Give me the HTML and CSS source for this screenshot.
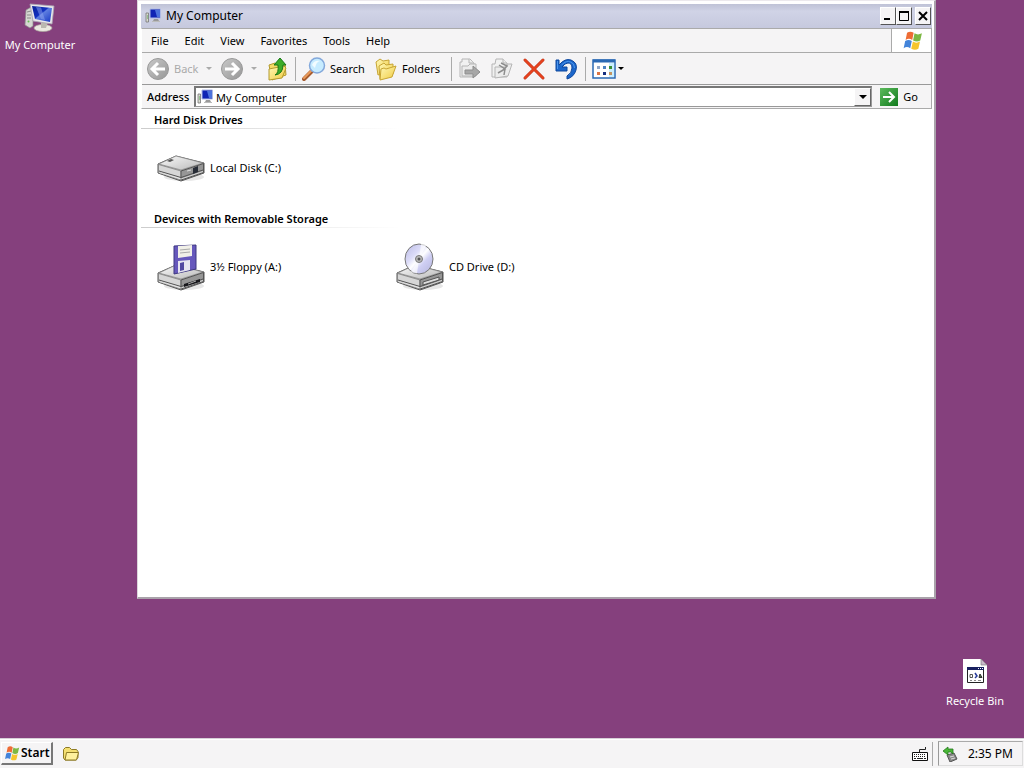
FILE: index.html
```
<!DOCTYPE html>
<html lang="en">
<head>
<meta charset="utf-8">
<title>My Computer</title>
<link rel="stylesheet" href="styles.css">
</head>
<body>
<svg class="defs" aria-hidden="true">
  <defs>
    <linearGradient id="screen" x1="0" y1="0" x2="1" y2="1"><stop offset="0" stop-color="#0a2196"/><stop offset=".45" stop-color="#1230c0"/><stop offset=".5" stop-color="#5f7fe0"/><stop offset="1" stop-color="#1637c4"/></linearGradient>
    <linearGradient id="metal" x1="0" y1="0" x2="1" y2="1"><stop offset="0" stop-color="#fafafa"/><stop offset="1" stop-color="#b9b9b9"/></linearGradient>
    <linearGradient id="greybtn" x1="0" y1="0" x2="1" y2="1"><stop offset="0" stop-color="#c9c9c9"/><stop offset="1" stop-color="#969696"/></linearGradient>
    <linearGradient id="yellow" x1="0" y1="0" x2="1" y2="1"><stop offset="0" stop-color="#fff9b8"/><stop offset="1" stop-color="#f0ca3f"/></linearGradient>
    <linearGradient id="green" x1="0" y1="0" x2="1" y2="1"><stop offset="0" stop-color="#5cbb5c"/><stop offset="1" stop-color="#117a1d"/></linearGradient>
    <linearGradient id="disc" x1="0" y1="0" x2="1" y2="1"><stop offset="0" stop-color="#b8b8e4"/><stop offset=".35" stop-color="#dcdcf8"/><stop offset=".5" stop-color="#ffffff"/><stop offset=".65" stop-color="#cfcff4"/><stop offset="1" stop-color="#b4b4dc"/></linearGradient>
    <symbol id="pc" viewBox="0 0 16 16">
      <path d="M1 5h2.500v9H1z" fill="#d9dbd0" stroke="#777" stroke-width=".8"/><path d="M2 8h1M2 10h1" stroke="#52a652"/>
      <path d="M5 1h10.500v9H5z" fill="#1024b4" stroke="#aeb9e4"/><path d="M10 2h5v7h-3z" fill="#4c72dc"/>
      <path d="M9 11h4l1 2H8z" fill="#999"/><path d="M7 13.500h8" stroke="#bbb"/>
    </symbol>
    <symbol id="flag" viewBox="0 0 20 20">
      <path d="M5.500 2.500q3-2 6 0l-1.300 6.500q-3-2-6 0z" fill="#ee6c35"/><path d="M12.300 3q3 2 6.700 0l-1.500 6.500q-3 2-6.500 0z" fill="#7db843"/>
      <path d="M3.800 10q3-2 6 0l-1.400 6.500q-3-2-6 0z" fill="#4384da"/><path d="M10.800 10.500q3 2 6.500 0l-1.500 6.500q-3 2-6.500 0z" fill="#f6c52c"/>
    </symbol>
    <symbol id="drive" viewBox="0 0 48 28">
      <ellipse cx="27" cy="23" rx="20" ry="4" fill="#e6e6e6"/>
      <path d="M1 10 19 2 47 9v10L24 27 1 19z" fill="#b7b7b7" stroke="#555"/>
      <path d="M2 10 19 2 46 9 24 16z" fill="url(#metal)" stroke="#888" stroke-width=".7"/>
      <path d="M1.500 10.500 24 17v9L1.500 18.500z" fill="#d6d6d6" stroke="#777" stroke-width=".7"/>
      <path d="M24 17 46.500 9.500V18.500L24 26z" fill="#969696" stroke="#555"/>
      <path d="M2 17 24 23.500 46 16" fill="none" stroke="#555"/><path d="M2 18.500 24 25 46 17.500" fill="none" stroke="#f1f1f1" stroke-width=".7"/>
    </symbol>
  </defs>
</svg>

<main class="desktop">
  <a class="shortcut shortcut-pc" href="#computer">
    <svg width="34" height="30" viewBox="0 0 34 30" aria-hidden="true">
      <path d="M3 7l7-4v20l-3 2-5-3z" fill="#d6d7d2" stroke="#8b8d8b" stroke-width=".7"/><path d="M4 9l4-1M4 12h4M4 15h4" stroke="#777" stroke-width=".8"/><circle cx="5.500" cy="18.500" r="1" fill="#65bd55"/>
      <ellipse cx="20" cy="25" rx="9" ry="3.500" fill="#ebe9e1" stroke="#aaa69c" stroke-width=".7"/><path d="M18 19h7l-2 6h-5z" fill="#bbb8b0"/>
      <path d="M7 1 31 3 29 21 10 18z" fill="#e8e7ea" stroke="#a8a3b0" stroke-width=".8"/><path d="M9 3 29 5 27 19 12 16z" fill="url(#screen)"/><path d="M13 4 18 4.500 22 17 18 16z" fill="#8da4f0" opacity=".5"/>
    </svg>
    <span>My Computer</span>
  </a>

  <section class="window" id="computer" aria-label="My Computer">
    <header class="titlebar">
      <svg class="icon16" aria-hidden="true"><use href="#pc"/></svg>
      <h1>My Computer</h1>
      <div class="controls">
        <button class="control" aria-label="Minimize"><svg width="10" height="10"><path d="M1 8h6" stroke="#000" stroke-width="2"/></svg></button>
        <button class="control" aria-label="Maximize"><svg width="10" height="10"><path d="M.5 1v8.500h9V1" fill="none" stroke="#000"/><path d="M0 1h10" stroke="#000" stroke-width="2"/></svg></button>
        <button class="control control-close" aria-label="Close"><svg width="10" height="10"><path d="m1 1 8 8M9 1 1 9" stroke="#000" stroke-width="2"/></svg></button>
      </div>
    </header>
    <div class="bars">
      <div class="menubar">
        <nav class="menus" aria-label="Menu"><button>File</button><button>Edit</button><button>View</button><button>Favorites</button><button>Tools</button><button>Help</button></nav>
        <div class="brand"><svg width="22" height="22" aria-hidden="true"><use href="#flag"/></svg></div>
      </div>
      <div class="toolbar" role="toolbar" aria-label="Navigation">
        <button class="tool tool-back" disabled>
          <svg width="24" height="24" aria-hidden="true"><circle cx="12" cy="12" r="10.500" fill="url(#greybtn)" stroke="#999"/><path d="M19 12H7m5-6-6 6 6 6" fill="none" stroke="#fff" stroke-width="3"/></svg>
          <span>Back</span><i class="caret"></i>
        </button>
        <button class="tool tool-forward" aria-label="Forward" disabled>
          <svg width="24" height="24" aria-hidden="true"><circle cx="12" cy="12" r="10.500" fill="url(#greybtn)" stroke="#999"/><path d="M5 12h12m-5-6 6 6-6 6" fill="none" stroke="#fff" stroke-width="3"/></svg>
          <i class="caret"></i>
        </button>
        <button class="tool tool-up" aria-label="Up">
          <svg width="24" height="24" aria-hidden="true"><path d="M3 8l6-2 2 2 8-1 1 11-14 5z" fill="#f5db67" stroke="#b39a30"/><path d="M3 12l15-3 2 2-4 10-13 2z" fill="url(#yellow)" stroke="#b39a30"/><path d="M9 18q4-2 3-10H8l6-7 6 7h-3q0 9-8 10z" fill="#3dac29" stroke="#187817"/></svg>
        </button>
        <span class="divider"></span>
        <button class="tool tool-search">
          <svg width="24" height="24" aria-hidden="true"><path d="m2 22 8-8" stroke="#a55a2d" stroke-width="4" stroke-linecap="round"/><path d="m2 21 8-8" stroke="#e99b5c" stroke-width="2" stroke-linecap="round"/><circle cx="15" cy="8.500" r="7.500" fill="#c7ecff" stroke="#83a8db" stroke-width="1.500"/><path d="M10 8q2-5 8-4-4 1-5 7z" fill="#f2fcff"/></svg>
          <span>Search</span>
        </button>
        <button class="tool tool-folders">
          <svg width="24" height="24" aria-hidden="true"><path d="M2 5l4-3 3 2 6-1v11L4 18z" fill="url(#yellow)" stroke="#c7a534"/><path d="M5 9l5-3 2 2 7-1v10L6 22z" fill="url(#yellow)" stroke="#c7a534"/><path d="m7 12 3-1 2 1 10-3-4 11-12 3z" fill="url(#yellow)" stroke="#c7a534"/></svg>
          <span>Folders</span>
        </button>
        <span class="divider"></span>
        <button class="tool tool-icon" aria-label="Move To" disabled>
          <svg width="24" height="24" aria-hidden="true"><path d="M2 20V5h2V2h8l4 4v14z" fill="#f1f1f1" stroke="#b5b5b5"/><path d="M11 2v4h5M4 9h6l2-2h6v12H4z" fill="#ececec" stroke="#b5b5b5"/><path d="M7 13h8V9l7 6-7 6v-4H7z" fill="#a7a7a7" stroke="#8d8d8d"/></svg>
        </button>
        <button class="tool tool-icon" aria-label="Copy To" disabled>
          <svg width="24" height="24" aria-hidden="true"><path d="M2 20V7h3l1-5h7l4 4v14z" fill="#f1f1f1" stroke="#b5b5b5"/><path d="M13 2v4h4M5 10h12V7h5l-4 12-13 2z" fill="#ececec" stroke="#b5b5b5"/><path d="m9 8 6 4-7 4m7-4-1 6M11 6l6 3-5 5" fill="none" stroke="#8d8d8d" stroke-width="1.500"/></svg>
        </button>
        <button class="tool tool-icon" aria-label="Delete">
          <svg width="24" height="24" aria-hidden="true"><path d="m3 3 18 18M21 3 3 21" stroke="#b92d12" stroke-width="3" stroke-linecap="round"/><path d="m3 3 18 18M21 3 3 21" stroke="#e7431f" stroke-width="2" stroke-linecap="round"/></svg>
        </button>
        <button class="tool tool-undo" aria-label="Undo">
          <svg width="24" height="24" aria-hidden="true"><path d="M2 3h3v5q6-7 12-5 7 3 5 10-2 7-9 9v-3q5-3 5-8 0-5-4-5-3 0-6 4h5v4H2z" fill="#1c66ca" stroke="#0e489e"/><path d="M3.500 4v8m4-4q5-5 9-3 4 1 4 6" fill="none" stroke="#4c96ed"/></svg>
        </button>
        <span class="divider"></span>
        <button class="tool tool-views" aria-label="Views">
          <svg width="24" height="24" aria-hidden="true"><path d="M1 3h22v18H1z" fill="#fff" stroke="#2a69b4" stroke-width="1.500"/><path d="M1 4h22" stroke="#2a69b4" stroke-width="3"/><path d="M17 6h5v14h-5z" fill="#caefff"/><path d="M5 9h3v3H5z" fill="#8fa6c8"/><path d="M11 9h3v3h-3z" fill="#4a82c2"/><path d="M17 9h3v3h-3z" fill="#388e34"/><path d="M5 15h3v3H5z" fill="#dc7544"/><path d="M11 15h3v3h-3z" fill="#183080"/><path d="M17 15h3v3h-3z" fill="#c49360"/></svg>
          <i class="caret"></i>
        </button>
      </div>
      <form class="address">
        <label for="address">Address</label>
        <div class="field">
          <svg class="icon16" aria-hidden="true"><use href="#pc"/></svg>
          <input id="address" type="text" value="My Computer">
          <button class="drop" type="button" aria-label="Show addresses"><i class="caret caret-large"></i></button>
        </div>
        <button class="go" type="button">
          <svg width="18" height="18" aria-hidden="true"><path d="M0 0h18v18H0z" fill="url(#green)"/><path d="M3 9h11M9 4l5 5-5 5" fill="none" stroke="#fff" stroke-width="2"/></svg>
          <span>Go</span>
        </button>
      </form>
    </div>
    <div class="content">
      <h2>Hard Disk Drives</h2>
      <div class="items">
        <a class="item" href="#c">
          <svg width="48" height="48" viewBox="0 0 48 48" aria-hidden="true"><use href="#drive" y="10" width="48" height="28"/><path d="m10 17 4-2 3 1-4 2z" fill="#555"/><path d="m36 24 5-2v6l-5 2z" fill="#272c36"/><path d="M30 27l4-1" stroke="#ddd"/></svg>
          <span>Local Disk (C:)</span>
        </a>
      </div>
      <h2>Devices with Removable Storage</h2>
      <div class="items">
        <a class="item" href="#a">
          <svg width="48" height="48" viewBox="0 0 48 48" aria-hidden="true"><use href="#drive" y="20" width="48" height="28"/><path d="m27 41 16-5v3l-16 5z" fill="#17171b"/><path d="M31 41l8-3" stroke="#aaa"/><path d="m17 3 22-1v24l-22 5z" fill="#6658bc" stroke="#3d3780"/><path d="m21 3 14-1v11l-14 2z" fill="#f1f0e8"/><path d="m23 7 10-1m-10 4 10-1" stroke="#aaa"/><path d="m21 18 12-1v10l-12 3z" fill="#e6e5f0"/><path d="m23 20 4-1v8l-4 1z" fill="#5148a0"/></svg>
          <span>3½ Floppy (A:)</span>
        </a>
        <a class="item" href="#d">
          <svg width="48" height="48" viewBox="0 0 48 48" aria-hidden="true"><use href="#drive" y="20" width="48" height="28"/><path d="m27 39 16-5v3l-16 5z" fill="#ddd" stroke="#555"/><ellipse cx="23" cy="16" rx="14" ry="15" fill="url(#disc)" stroke="#777"/><path d="m23 16 2-15h6zM23 16 15 29l6 1.500z" fill="#fff" opacity=".65"/><circle cx="23" cy="16" r="3.500" fill="#bbb" stroke="#777"/><circle cx="23" cy="16" r="1.500" fill="#555"/></svg>
          <span>CD Drive (D:)</span>
        </a>
      </div>
    </div>
  </section>

  <a class="shortcut shortcut-bin" href="#bin">
    <svg width="24" height="30" viewBox="0 0 24 30" aria-hidden="true"><path d="M0 0h18l6 6v24H0z" fill="#fff"/><path d="M18 0v6h6z" fill="#c9b8ca" stroke="#777" stroke-width=".6"/><path d="M4.500 8.500h16v15h-16z" fill="#fff" stroke="#222"/><path d="M4 8h17v3H4z" fill="#182060"/><path d="M15 9.500h1m1 0h1m1 0h1" stroke="#fff"/><path d="M7 15.500h2.500v3H7z" fill="none" stroke="#555"/><path d="m12 14 2 3-2 2" fill="none" stroke="#293d9c" stroke-width="1.500"/><path d="m16 18.500 1-3.500 2 3.500z" fill="#447344" stroke="#333"/><path d="M7 21.500h2m2 0h2m2 0h3" stroke="#888"/></svg>
    <span>Recycle Bin</span>
  </a>
</main>

<footer class="taskbar">
  <button class="start"><svg width="17" height="17" aria-hidden="true"><use href="#flag"/></svg><span>Start</span></button>
  <button class="launch" aria-label="Explorer"><svg width="18" height="16" aria-hidden="true"><path d="M1.500 12V3.500l2-2h4l2 2h5l1.500 2v6l-2 2.500H3z" fill="#f4df70" stroke="#8d7a25"/><path d="M3 14 4.500 6.500h12L14.500 14z" fill="#fff19c" stroke="#8d7a25"/></svg></button>
  <button class="keyboard" aria-label="Keyboard"><svg width="16" height="16" aria-hidden="true"><path d="M7.500 6V3.500h6V1" fill="none" stroke="#222"/><path d="M.5 6.500h15v8H.5z" fill="#fff" stroke="#111"/><path d="M2 8.500h12M2 10.500h12" stroke="#222" stroke-dasharray="1 1"/><path d="M2 12.500h2m1 0h6m1 0h2" stroke="#222"/></svg></button>
  <span class="tray-divider"></span>
  <div class="tray">
    <svg width="16" height="16" aria-hidden="true"><path d="m5 9 7-2 3 6-7 3z" fill="#888" stroke="#555"/><path d="m8 11 4-1m-3 3 4-1" stroke="#ddd"/><path d="M1 5 6 1v2h5v5l-2-2H6v3z" fill="#48b536" stroke="#247a1c" stroke-width=".8"/></svg>
    <time datetime="14:35">2:35 PM</time>
  </div>
</footer>
</body>
</html>
```
FILE: styles.css
```
* { box-sizing: border-box; }
html, body { height: 100%; }
body {
  margin: 0;
  display: flex;
  flex-direction: column;
  overflow: hidden;
  background: #85407d;
  color: #000;
  font: 11px/16px "Noto Sans", "Open Sans", sans-serif;
}
button, input {
  margin: 0;
  padding: 0;
  border: 0;
  background: none;
  color: inherit;
  font: inherit;
}
a { color: inherit; text-decoration: none; }
svg { flex: none; display: block; }
h1, h2 { margin: 0; font-size: inherit; }
.defs { position: absolute; width: 0; height: 0; }
.icon16 { width: 16px; height: 16px; }

.desktop { position: relative; flex: 1; min-height: 0; }
.shortcut {
  position: absolute;
  width: 80px;
  display: flex;
  flex-direction: column;
  align-items: center;
  gap: 4px;
  color: #fff;
}
.shortcut-pc { left: 0; top: 3px; }
.shortcut-bin { right: 9px; bottom: 29px; }

.window {
  position: absolute;
  inset: 0 88px 139px 137px;
  display: flex;
  flex-direction: column;
  padding: 3px 2px 1px 3px;
  background: #fff;
  border: 1px solid #dcd6dc;
  border-top-color: #ece9ed;
  border-right: 2px solid #a9a2aa;
  border-bottom: 2px solid #a9a2aa;
}
.titlebar {
  height: 24px;
  display: flex;
  align-items: center;
  gap: 5px;
  padding: 0 1px 0 4px;
  background: linear-gradient(#bfc2d6, #d0d3e6 30%, #c6c9de);
}
.titlebar h1 { flex: 1; font-size: 12px; font-weight: 400; }
.controls { display: flex; }
.control {
  width: 16px;
  height: 18px;
  display: grid;
  place-items: center;
  background: #f5f4f5;
  border: 1px solid #fff;
  border-right-color: #555;
  border-bottom-color: #555;
}
.control-close { margin-left: 3px; }
.bars { background: #f5f4f5; border: 1px solid #aaa; border-left-color: #fff; }
.menubar { display: flex; height: 24px; border-bottom: 1px solid #aaa; }
.menus { flex: 1; display: flex; padding-left: 1px; }
.menus button { padding: 0 8px; }
.brand { width: 40px; display: grid; place-items: center; background: #fff; border-left: 1px solid #aaa; }
.toolbar { height: 32px; display: flex; align-items: center; padding-left: 4px; border-bottom: 1px solid #999; }
.tool { height: 28px; display: flex; align-items: center; gap: 4px; }
.tool:disabled { color: #aaa; }
.tool-back { width: 74px; }
.tool-back .caret { margin-left: 4px; }
.tool-forward { width: 46px; gap: 7px; }
.tool-up { width: 23px; }
.tool-search { width: 72px; }
.tool-folders { width: 71px; }
.tool-icon { width: 32px; }
.tool-undo { width: 25px; }
.tool-views { gap: 2px; }
.divider { width: 1px; height: 24px; margin: 0 6px; background: #aaa; }
.caret { border: 3px solid transparent; border-top-color: currentColor; border-bottom: 0; }
.caret-large { border-width: 4px 4px 0; }
.address { height: 23px; display: flex; align-items: center; padding: 0 13px 0 5px; }
.address label { width: 47px; font-weight: 500; }
.field {
  flex: 1;
  height: 21px;
  display: flex;
  align-items: center;
  padding-left: 1px;
  background: #fff;
  border: 1px solid #999;
  border-top: 2px solid #777;
  border-left: 2px solid #777;
}
.field input { flex: 1; min-width: 0; height: 18px; padding-left: 3px; outline: 0; }
.drop {
  width: 17px;
  height: 18px;
  display: grid;
  place-items: center;
  background: #f5f4f5;
  border: 1px solid #fff;
  border-right-color: #666;
  border-bottom-color: #666;
}
.go { display: flex; align-items: center; gap: 5px; margin-left: 8px; }
.content { flex: 1; min-height: 0; background: #fff; }
.content h2 {
  height: 20px;
  padding: 3px 0 0 13px;
  font-weight: 600;
  background: linear-gradient(90deg, #ccc, #fff) left bottom / 260px 1px no-repeat;
}
.items { display: flex; height: 79px; align-items: center; padding: 0 0 2px 16px; }
.item { width: 239px; display: flex; align-items: center; gap: 5px; }

.taskbar {
  height: 30px;
  display: flex;
  align-items: center;
  padding: 2px 1px 2px 1px;
  background: #f5f4f5;
  border-top: 1px solid #d8d0d8;
  box-shadow: inset 0 1px #fff;
}
.start {
  width: 52px;
  height: 23px;
  display: flex;
  align-items: center;
  gap: 1px;
  padding-left: 1px;
  border: 1px solid #fff;
  border-right: 2px solid #777;
  border-bottom: 2px solid #777;
  font-size: 12px;
  font-weight: 600;
}
.launch { margin-left: 9px; }
.keyboard { margin-left: auto; }
.tray-divider { width: 1px; height: 24px; margin: 0 5px 0 4px; background: #aaa; }
.tray {
  height: 25px;
  display: flex;
  align-items: center;
  gap: 10px;
  padding: 0 9px 0 3px;
  border: 1px solid #ddd;
  border-top-color: #aaa;
  border-left-color: #999;
}
.tray time { font-size: 12px; }
```
